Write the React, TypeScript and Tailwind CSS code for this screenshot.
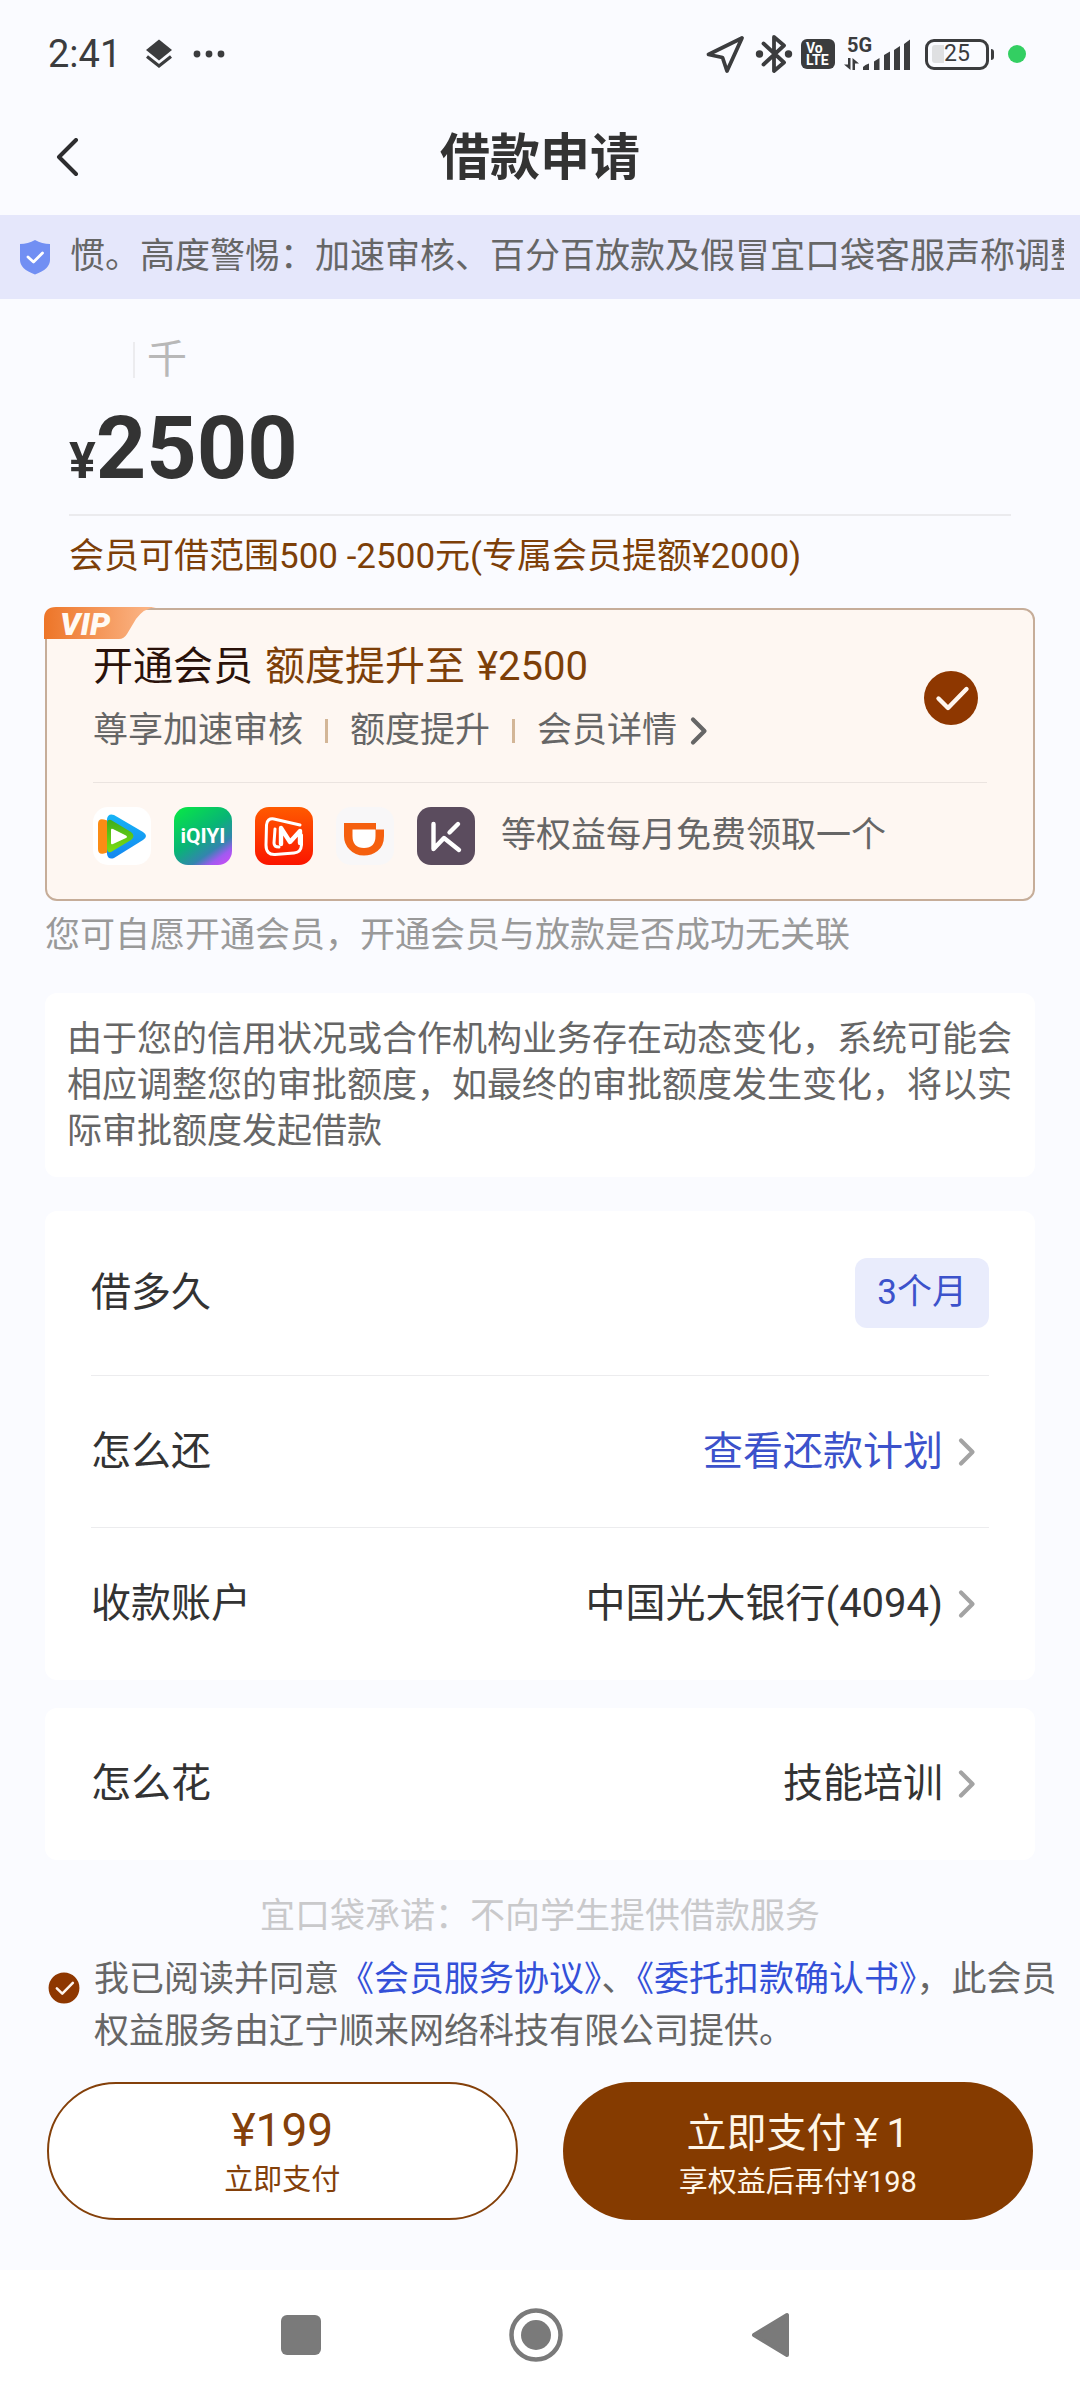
import type { ReactNode } from "react";

function StatusBar() {
  return (
    <div className="flex h-[108px] items-center justify-between pl-12 pr-[54px] text-[#3b3c3e]">
      <div className="flex items-center">
        <span className="text-[38px] leading-[40px]">2:41</span>
        <svg className="ml-6 h-8 w-[28px]" viewBox="0 0 28 32" fill="currentColor">
          <path d="M14 1.5 27 12 14 22.5 1 12Z" />
          <path d="M2 18.5 14 28 26 18.5" fill="none" stroke="currentColor" strokeWidth="3.2" />
        </svg>
        <svg className="ml-5 h-2 w-8" viewBox="0 0 32 8" fill="currentColor">
          <circle cx="4" cy="4" r="3.4" />
          <circle cx="16" cy="4" r="3.4" />
          <circle cx="28" cy="4" r="3.4" />
        </svg>
      </div>
      <div className="flex items-center">
        <svg className="h-10 w-10" viewBox="0 0 40 40" fill="none" stroke="currentColor" strokeWidth="3.8" strokeLinejoin="round">
          <path d="M37 4 3.500 20.500 17.500 23.500 22 37Z" />
        </svg>
        <svg className="ml-2.5 h-10 w-[38px]" viewBox="0 0 38 40" fill="none" stroke="currentColor" strokeWidth="3.8" strokeLinecap="round" strokeLinejoin="round">
          <path d="M8.500 9.500 29 28.500 19 37V3L29 11.500 8.500 30.500" />
          <circle cx="4.500" cy="20" r="3.700" fill="currentColor" stroke="none" />
          <circle cx="33.500" cy="20" r="3.700" fill="currentColor" stroke="none" />
        </svg>
        <div className="ml-2 flex h-[30px] w-[34px] flex-col items-center justify-center rounded-[6px] bg-[#3b3c3e] text-[14px] font-bold leading-[12px] text-white">
          <span className="w-6">Vo</span>
          <span className="w-6">LTE</span>
        </div>
        <svg className="ml-2 h-9 w-[70px] overflow-visible" viewBox="0 0 70 36" fill="currentColor">
          <text x="4" y="16" fontSize="20" fontWeight="700">5G</text>
          <path d="M7.500 22V34L1 28.500H5V22ZM9.500 34V22L16 27.500H12V34Z" />
          <path d="M20 34V31Q22 28.500 26 27.500V34ZM31 34V25.500L36.500 22V34ZM41 34V19L47 15.500V34ZM51 34V14L57 10V34ZM61 34V8L67 3.500V34Z" />
        </svg>
        <div className="ml-3 flex items-center">
          <div className="flex h-[31px] w-[64px] items-center rounded-[9px] border-3 border-[#3b3c3e] p-1">
            <div className="h-[18px] w-3 shrink-0 rounded-l-[3px] bg-[#dfe0e2]" />
            <span className="text-[23px] leading-6">25</span>
          </div>
          <div className="ml-0.5 h-[11px] w-[3px] rounded-r-sm bg-[#3b3c3e]" />
        </div>
        <div className="ml-3.5 size-[18px] rounded-full bg-[#33cf62]" />
      </div>
    </div>
  );
}

function CheckCircle({ id, label, className }: { id: string; label: string; className: string }) {
  return (
    <label htmlFor={id} className={`relative block shrink-0 ${className}`}>
      <input id={id} type="checkbox" defaultChecked aria-label={label} className="sr-only" />
      <svg viewBox="0 0 56 56" className="block size-full" fill="none">
        <circle cx="28" cy="28" r="27" fill="#8e3700" />
        <path d="M15.500 28.500 25 38 43.500 19" stroke="#fff6ef" strokeWidth="4.400" strokeLinecap="round" strokeLinejoin="round" />
      </svg>
    </label>
  );
}

function Chevron({ className }: { className: string }) {
  return (
    <svg className={`h-[30px] w-5 shrink-0 ${className}`} viewBox="0 0 20 30" fill="none" stroke="currentColor" strokeWidth="4.200" strokeLinecap="round" strokeLinejoin="round">
      <path d="M4 3.500 15.500 15 4 26.500" />
    </svg>
  );
}

function Row({ label, children }: { label: string; children: ReactNode }) {
  return (
    <div className="flex h-[152px] items-center justify-between">
      <span>{label}</span>
      {children}
    </div>
  );
}

function PartnerIcons() {
  return (
    <div className="flex gap-[23px]">
      <svg className="size-[58px]" viewBox="0 0 58 58">
        <defs>
          <linearGradient id="tv" x1="0" y1="0" x2="0" y2="1">
            <stop offset="0" stopColor="#16b4f6" />
            <stop offset="1" stopColor="#1487f0" />
          </linearGradient>
          <linearGradient id="tvGreen" x1="0" y1="0" x2="0" y2="1">
            <stop offset="0" stopColor="#3fae1c" />
            <stop offset="1" stopColor="#7ddd12" />
          </linearGradient>
        </defs>
        <rect width="58" height="58" rx="15" fill="#fff" />
        <path d="M5 17Q5 11 11 12.500L16 14V45L11 46.500Q5 48 5 42Z" fill="#fb8c14" />
        <path d="M14 12Q15 6 21 8L50 25Q56 29 50 33L21 51Q15 53 14 47Z" fill="url(#tv)" />
        <path d="M14 17Q14 12 18 13L38 25Q43 29 38 33L18 45Q14 46 14 41Z" fill="url(#tvGreen)" />
        <path d="M18 23Q18 21 20 22L33 28.500Q35 30 33 31L20 37Q18 38 18 36Z" fill="#fff" />
      </svg>
      <svg className="size-[58px]" viewBox="0 0 58 58">
        <defs>
          <linearGradient id="iq" x1="0.200" y1="0" x2="0.900" y2="1">
            <stop offset="0" stopColor="#08e14c" />
            <stop offset="0.450" stopColor="#08b476" />
            <stop offset="0.720" stopColor="#3385ae" />
            <stop offset="0.860" stopColor="#a05af0" />
            <stop offset="1" stopColor="#c94df5" />
          </linearGradient>
        </defs>
        <rect width="58" height="58" rx="14" fill="url(#iq)" />
        <text x="29" y="36" textAnchor="middle" fontSize="21" fontWeight="700" fill="#fff">iQIYI</text>
      </svg>
      <svg className="size-[58px]" viewBox="0 0 58 58" fill="none" stroke="#fff" strokeLinecap="round" strokeLinejoin="round">
        <defs>
          <linearGradient id="mg" x1="0" y1="0" x2="0" y2="1">
            <stop offset="0" stopColor="#ff5a00" />
            <stop offset="1" stopColor="#fb1500" />
          </linearGradient>
        </defs>
        <rect width="58" height="58" rx="14" fill="url(#mg)" stroke="none" />
        <path d="M45 18 19 12Q12 11 11.500 18L11 38Q11 48 20 47.500L39 46Q46 45.500 46.500 38V28" strokeWidth="3" />
        <path d="M20 22 19 36Q19 40 24 40" strokeWidth="3" />
        <path d="M26 37V21L35 35 45 24V36" strokeWidth="4.400" />
      </svg>
      <svg className="size-[58px]" viewBox="0 0 58 58">
        <rect width="58" height="58" rx="15" fill="#f8f7f8" />
        <path d="M8 16H40V22.500H48V29Q48 39 41.500 44 35.500 48.500 28 48.500 19 48.500 13.500 42.500 8 37 8 29Z" fill="#f5600f" />
        <path d="M16.500 22.500H39.500V29Q39.500 41 28 41 16.500 41 16.500 29Z" fill="#fff" />
      </svg>
      <svg className="size-[58px]" viewBox="0 0 58 58" fill="none" stroke="#fff" strokeWidth="4.400" strokeLinecap="round" strokeLinejoin="round">
        <rect width="58" height="58" rx="14" fill="#5b4c5e" stroke="none" />
        <path d="M16.500 17V42L27 31 42 43M32.500 25.500 41 17" />
      </svg>
    </div>
  );
}

function VipBadge() {
  return (
    <svg className="absolute -left-[3px] -top-[3px] h-8 w-28 overflow-visible" viewBox="0 0 112 32">
      <defs>
        <linearGradient id="vip" x1="0" y1="0" x2="1" y2="0">
          <stop offset="0" stopColor="#ed7528" />
          <stop offset="1" stopColor="#fcb98c" />
        </linearGradient>
      </defs>
      <path d="M12 0H112Q100 1 92 12L83 27Q80 32 75 32H0V12Q0 0 12 0Z" fill="url(#vip)" />
      <text x="16" y="28" fontSize="32" fontWeight="900" fontStyle="italic" fill="#fffaf4">VIP</text>
    </svg>
  );
}

export default function App() {
  return (
    <div className="flex min-h-screen flex-col bg-[#fafbff] font-['Roboto','Noto_Sans_CJK_SC',sans-serif] text-[35px] leading-[46px] text-[#666]">
      <StatusBar />

      <header className="grid h-[107px] grid-cols-[120px_1fr_120px] items-center pb-2">
        <button type="button" aria-label="返回" className="pl-14 text-[#2d2d2f]">
          <svg className="h-10 w-6" viewBox="0 0 24 40" fill="none" stroke="currentColor" strokeWidth="4" strokeLinecap="round" strokeLinejoin="round">
            <path d="M20 2 3 19 20 36" />
          </svg>
        </button>
        <h1 className="text-center text-[50px] font-bold leading-[60px] text-[#333]">借款申请</h1>
      </header>

      <div className="flex h-[84px] items-center bg-[#e5e7fb] pl-5 pr-4">
        <svg className="h-9 w-[30px] shrink-0" viewBox="0 0 30 36">
          <path d="M15 1Q22 5 30 5V21Q30 30 15 35.500 0 30 0 21V5Q8 5 15 1Z" fill="#718ff3" />
          <path d="M8 18 13.500 23 22.500 14" fill="none" stroke="#fff" strokeWidth="2.800" strokeLinecap="round" strokeLinejoin="round" />
        </svg>
        <p className="ml-5 flex-1 overflow-hidden whitespace-nowrap">
          惯。高度警惕：加速审核、百分百放款及假冒宜口袋客服声称调整
        </p>
      </div>

      <main className="flex flex-col px-[45px]">
        <section className="mx-6">
          <div className="flex items-center pl-16 pt-9 text-[40px] leading-[50px] text-[#b8b8b8]">
            <span className="mr-3 h-9 w-0.5 bg-[#ececef]" />
            千
          </div>
          <p className="flex h-[131px] items-baseline border-b-2 border-[#ebebee] pt-1.5 font-bold leading-[114px] text-[#333]">
            <span className="text-[50px]">¥</span>
            <span className="text-[88px]">2500</span>
          </p>
          <p className="mt-[18px] text-[#7d3f08]">会员可借范围500 -2500元(专属会员提额¥2000)</p>
        </section>

        <section className="relative mt-7 rounded-xl border-2 border-[#c6ad99] bg-[#fef7f2] px-[46px] pb-[34px] pt-8">
          <VipBadge />
          <div className="flex items-start justify-between">
            <div>
              <h2 className="flex gap-3 text-[40px] leading-[50px] text-[#2a120a]">
                开通会员
                <span className="text-[#7d3f08]">额度提升至</span>
                <span className="text-[#7d3f08]">¥2500</span>
              </h2>
              <div className="mt-4 flex items-center">
                <span>尊享加速审核</span>
                <span className="mx-[22px] h-6 w-[3px] bg-[#d3b697]" />
                <span>额度提升</span>
                <span className="mx-[22px] h-6 w-[3px] bg-[#d3b697]" />
                <a href="#member" className="flex items-center">
                  会员详情
                  <Chevron className="ml-3" />
                </a>
              </div>
            </div>
            <CheckCircle id="vip-open" label="开通会员" className="mr-2 mt-7 size-14" />
          </div>
          <div className="mt-7 flex items-center border-t border-[#ebe4e0] pt-6">
            <PartnerIcons />
            <span className="ml-[26px]">等权益每月免费领取一个</span>
          </div>
        </section>
        <p className="mt-3 text-[#999]">您可自愿开通会员，开通会员与放款是否成功无关联</p>

        <p className="mt-[34px] rounded-xl bg-white px-[22px] pb-[22px] pt-6">
          由于您的信用状况或合作机构业务存在动态变化，系统可能会相应调整您的审批额度，如最终的审批额度发生变化，将以实际审批额度发起借款
        </p>

        <section className="mt-[34px] divide-y divide-[#ececee] rounded-xl bg-white px-[46px] text-[40px] leading-[50px] text-[#333]">
          <div className="flex h-[165px] items-center justify-between">
            <span>借多久</span>
            <button type="button" className="rounded-xl bg-[#e9ecfc] px-[22px] py-3 text-[35px] leading-[46px] text-[#3c52cb]">3个月</button>
          </div>
          <Row label="怎么还">
            <a href="#plan" className="flex items-center text-[#3c52cb]">
              查看还款计划
              <Chevron className="ml-3.5 mr-3 text-[#a3a3a3]" />
            </a>
          </Row>
          <Row label="收款账户">
            <button type="button" className="flex items-center">
              中国光大银行(4094)
              <Chevron className="ml-3.5 mr-3 text-[#a3a3a3]" />
            </button>
          </Row>
        </section>

        <section className="mt-7 rounded-xl bg-white px-[46px] text-[40px] leading-[50px] text-[#333]">
          <Row label="怎么花">
            <button type="button" className="flex items-center">
              技能培训
              <Chevron className="ml-3.5 mr-3 text-[#a3a3a3]" />
            </button>
          </Row>
        </section>

        <p className="mt-[34px] text-center text-[#c9c9cb]">宜口袋承诺：不向学生提供借款服务</p>
      </main>

      <footer className="mt-3.5">
        <div className="flex items-start pl-12 pr-3">
          <CheckCircle id="agree" label="我已阅读并同意" className="mt-[18px] size-8" />
          <p className="ml-3.5 leading-[52px]">
            我已阅读并同意<a href="#member-terms" className="text-[#3350d8]">《会员服务协议》</a>、<a href="#debit-terms" className="text-[#3350d8]">《委托扣款确认书》</a>，此会员权益服务由辽宁顺来网络科技有限公司提供。
          </p>
        </div>
        <div className="mt-6 grid grid-cols-2 gap-[45px] px-[47px]">
          <button type="button" className="flex h-[138px] flex-col items-center justify-center rounded-full border-2 border-[#84400a] bg-white pt-1 text-[#84400a]">
            <span className="text-[46px] leading-[54px]">¥199</span>
            <span className="text-[29px] leading-[46px]">立即支付</span>
          </button>
          <button type="button" className="flex h-[138px] flex-col items-center justify-center rounded-full bg-[#853b00] pt-3 text-[#fff6e8]">
            <span className="text-[40px] leading-[50px]">立即支付￥1</span>
            <span className="text-[29px] leading-[46px]">享权益后再付¥198</span>
          </button>
        </div>
      </footer>

      <nav className="mt-auto flex h-[130px] items-center justify-center gap-[188px] bg-white pr-2">
        <button type="button" aria-label="最近任务">
          <svg className="size-10" viewBox="0 0 40 40" fill="#7a7a7a">
            <rect width="40" height="40" rx="6" />
          </svg>
        </button>
        <button type="button" aria-label="主屏幕">
          <svg className="size-[54px]" viewBox="0 0 54 54" fill="#7a7a7a">
            <circle cx="27" cy="27" r="24.500" fill="none" stroke="#7a7a7a" strokeWidth="4.500" />
            <circle cx="27" cy="27" r="15" />
          </svg>
        </button>
        <button type="button" aria-label="返回上一级">
          <svg className="h-[46px] w-10" viewBox="0 0 40 46" fill="#7a7a7a" stroke="#7a7a7a" strokeWidth="4" strokeLinejoin="round">
            <path d="M36 3V43L3 23Z" />
          </svg>
        </button>
      </nav>
    </div>
  );
}
